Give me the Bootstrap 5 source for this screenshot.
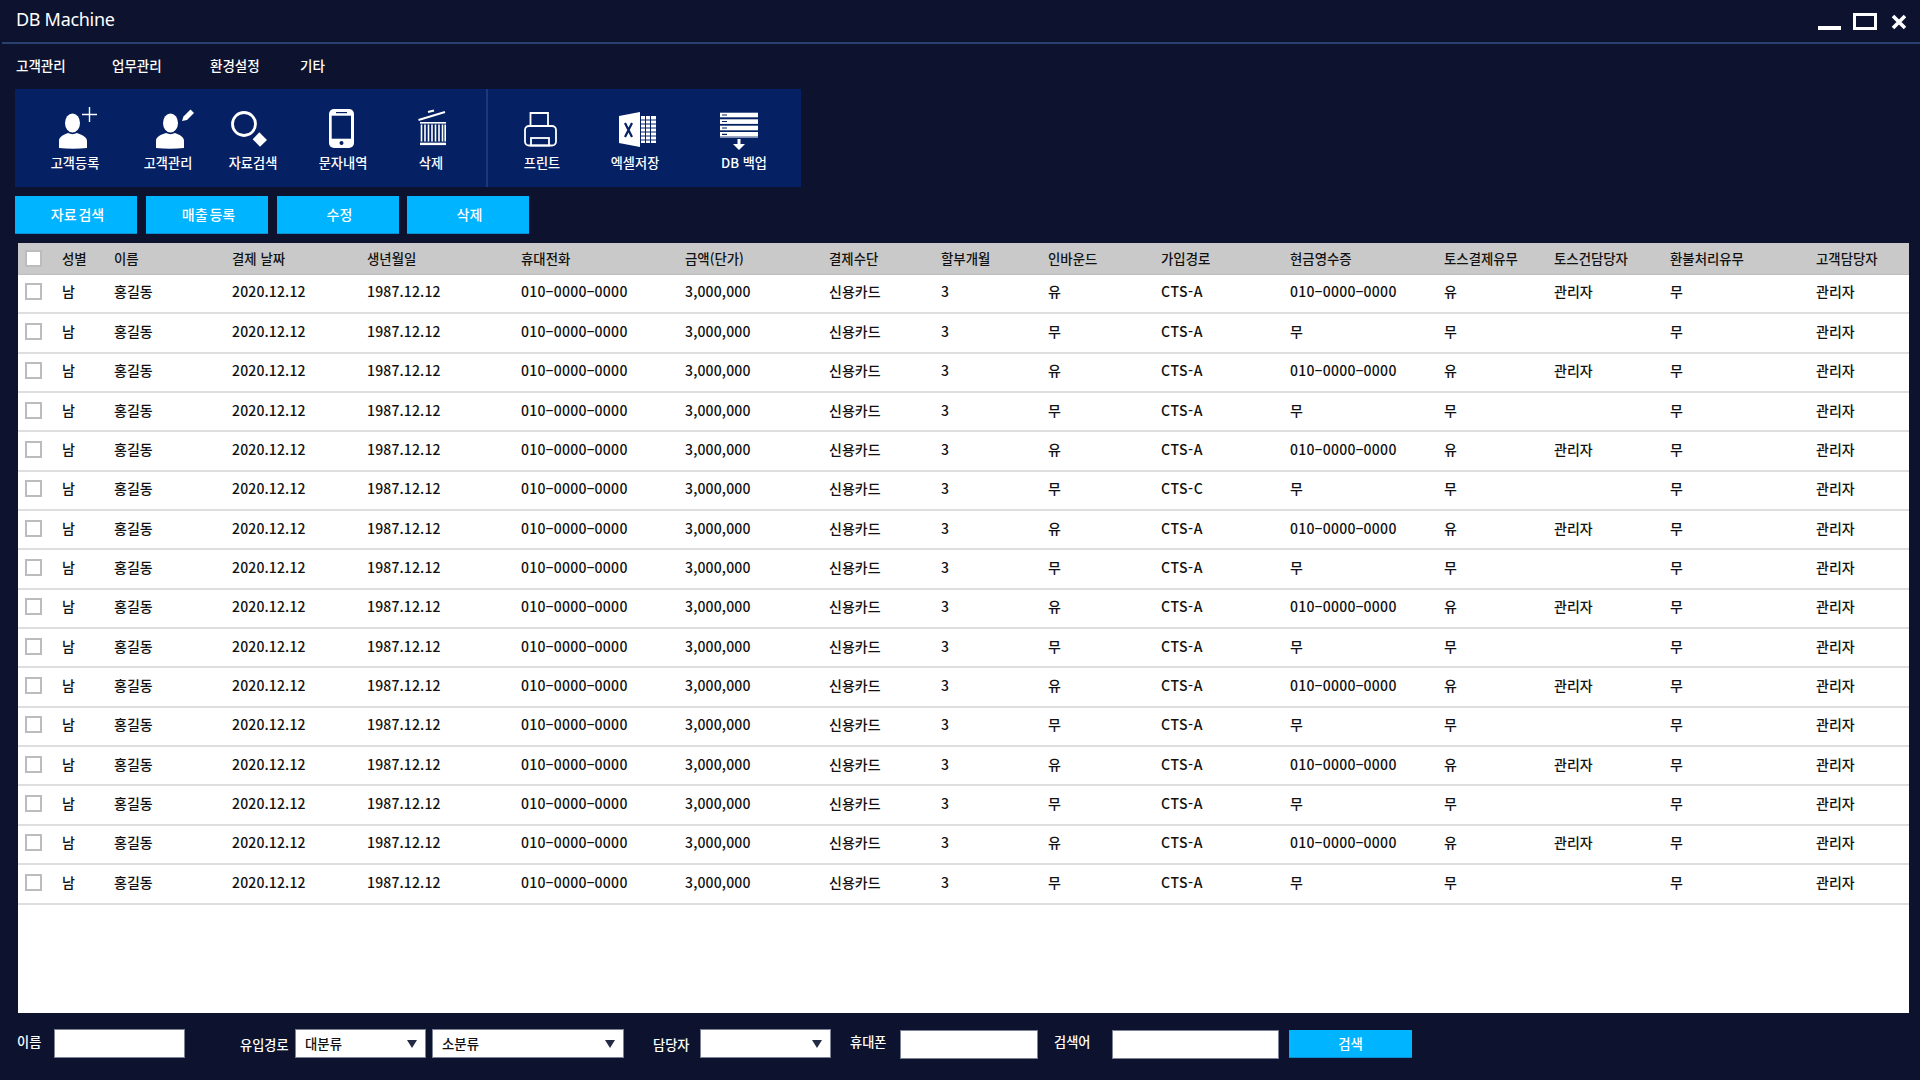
<!DOCTYPE html>
<html lang="ko">
<head>
  <meta charset="UTF-8" />
  <meta name="viewport" content="width=device-width, initial-scale=1.0" />
  <title>DB Machine</title>
  <link href="https://cdn.jsdelivr.net/npm/bootstrap@5.3.0/dist/css/bootstrap.min.css" rel="stylesheet">
  <style>
    html, body {
      height: 1080px;
      overflow: hidden;
    }

    body {
      background: #0d132e;
      color: #fff;
      font-family: "Noto Sans CJK KR", "Noto Sans", sans-serif;
      font-size: 14px;
    }

    .title-bar {
      height: 44px;
      margin-left: 2px;
      padding: 0 14px 0 14px;
      border-bottom: 2px solid #27406f;
    }

    .app-title {
      font-family: "Noto Sans", "Noto Sans CJK KR", sans-serif;
      font-size: 18px;
      letter-spacing: -0.3px;
      line-height: 1;
      margin-bottom: 5px;
    }

    .win-btn {
      display: block;
      margin-top: 7px;
    }

    .menu-bar {
      height: 45px;
      padding: 0 0 2px 16px;
      font-size: 13.5px;
      font-weight: 500;
    }

    .menu-item {
      color: #fff;
      text-decoration: none;
    }

    .menu-item:nth-child(1) { width: 96px; }
    .menu-item:nth-child(2) { width: 98px; }
    .menu-item:nth-child(3) { width: 90px; }

    .tool-bar {
      width: 786px;
      height: 98px;
      margin-left: 15px;
      background: #052163;
    }

    .tool-item {
      width: 60px;
      padding-top: 17px;
      text-align: center;
      font-size: 13.2px;
      font-weight: 500;
      line-height: 19px;
      white-space: nowrap;
    }

    .tool-item svg {
      display: block;
      margin-bottom: 3px;
    }

    .tool-item:nth-child(1) { margin-left: 30px; }
    .tool-item:nth-child(2) { margin-left: 33px; }
    .tool-item:nth-child(3) { margin-left: 25px; }
    .tool-item:nth-child(4) { margin-left: 30px; }
    .tool-item:nth-child(5) { margin-left: 28px; }
    .tool-item:nth-child(7) { margin-left: 24px; }
    .tool-item:nth-child(8) { margin-left: 33px; }
    .tool-item:nth-child(9) { margin-left: 49px; }

    .tool-sep {
      width: 2px;
      margin-left: 25px;
      background: #1b3a7c;
    }

    .action-bar {
      gap: 9px;
      margin: 9px 0 9px 15px;
    }

    .action-bar .sky-btn:last-child { margin-left: -1px; }

    .sky-btn {
      width: 122px;
      height: 38px;
      padding: 0 0 0 3px;
      color: #fff;
      font-size: 14px;
      font-weight: 500;
      word-spacing: -2px;
      background: #00b4ff;
      border: 0;
      border-bottom: 1px solid #0a8fd0;
      border-radius: 0;
    }

    .sky-btn:hover {
      color: #fff;
      background: #00b4ff;
    }

    .grid-panel {
      height: 770px;
      margin: 0 11px 0 18px;
      background: #fff;
    }

    .data-grid {
      table-layout: fixed;
      width: 1891px;
      margin: 0;
      font-size: 14px;
      color: #111;
    }

    .data-grid th,
    .data-grid td {
      padding: 0;
      vertical-align: middle;
      white-space: nowrap;
      box-shadow: none;
    }

    .data-grid th {
      height: 31px;
      font-size: 13.4px;
      font-weight: 500;
      background: #c9c9c9;
      border-bottom: 1px solid #bdbdbd;
    }

    .data-grid td {
      height: 39.35px;
      padding-bottom: 3px;
      font-weight: 500;
      border-bottom: 2px solid #dedede;
    }

    .data-grid .num { letter-spacing: 0.15px; }
    .data-grid .tel { letter-spacing: 0.3px; }
    .data-grid .latin { letter-spacing: 0.6px; }

    .dash {
      display: inline-block;
      width: 7.8px;
      text-align: center;
      transform: scaleX(1.8);
    }

    .data-grid .form-check-input {
      display: block;
      width: 17px;
      height: 17px;
      margin: 0 0 0 7px;
      background-color: #fff;
      border: 2px solid #bcbcbc;
      border-radius: 0;
    }

    .col-check { width: 44px; }
    .col-gender { width: 52px; }
    .col-name { width: 118px; }
    .col-date { width: 135px; }
    .col-birth { width: 154px; }
    .col-phone { width: 164px; }
    .col-amount { width: 144px; }
    .col-pay { width: 112px; }
    .col-months { width: 107px; }
    .col-inbound { width: 113px; }
    .col-route { width: 129px; }
    .col-receipt { width: 154px; }
    .col-toss { width: 110px; }
    .col-tossman { width: 116px; }
    .col-refund { width: 146px; }
    .col-owner { width: 93px; }

    .search-bar {
      height: 67px;
      padding: 16px 0 0 17px;
      font-size: 13.2px;
      font-weight: 500;
    }

    .search-bar .form-control,
    .search-bar .form-select {
      height: 29px;
      min-height: 0;
      padding: 0 0 0 9px;
      color: #111;
      font-size: 13.4px;
      font-weight: 500;
      border: 1px solid #7d8397;
      border-radius: 0;
    }

    .search-bar .form-select {
      background-image: url("data:image/svg+xml,%3Csvg xmlns='http://www.w3.org/2000/svg' viewBox='0 0 10 8'%3E%3Cpath fill='%23222a44' d='M0 0h10L5 8z'/%3E%3C/svg%3E");
      background-position: right 8px center;
      background-size: 10px 8px;
    }

    .f-label-name { width: 37px; padding-top: 3px; }
    .f-label-route { width: 55px; margin-left: 55px; padding-top: 6px; }
    .f-label-owner { width: 47px; margin-left: 29px; padding-top: 6px; }
    .f-label-phone { width: 50px; margin-left: 19px; padding-top: 3px; }
    .f-label-word { width: 58px; margin-left: 16px; padding-top: 3px; }
    .search-bar .f-input-name { width: 131px; }
    .search-bar .f-select-a { width: 131px; }
    .search-bar .f-select-b { width: 192px; margin-left: 6px; }
    .search-bar .f-select-c { width: 131px; }
    .search-bar .f-input-phone { width: 138px; margin-top: 1px; }
    .search-bar .f-input-word { width: 167px; margin-top: 1px; }
    .search-bar .sky-btn { width: 123px; height: 28px; margin: 1px 0 0 10px; padding: 0; font-size: 13.4px; }
  </style>
</head>
<body class="m-0">
  <header class="title-bar d-flex align-items-center">
    <div class="app-title flex-grow-1">DB Machine</div>
    <svg class="win-btn" width="90" height="24" viewBox="0 0 90 24" aria-label="창 조절">
      <rect x="2" y="13" width="23" height="4" fill="#fff" />
      <rect x="38.5" y="1.5" width="21" height="14" fill="none" stroke="#fff" stroke-width="3" />
      <path d="M77 3l12 12M89 3L77 15" stroke="#fff" stroke-width="3.6" fill="none" />
    </svg>
  </header>

  <nav class="menu-bar d-flex align-items-center">
    <a class="menu-item" href="#">고객관리</a>
    <a class="menu-item" href="#">업무관리</a>
    <a class="menu-item" href="#">환경설정</a>
    <a class="menu-item" href="#">기타</a>
  </nav>

  <div class="tool-bar d-flex">
    <div class="tool-item">
      <svg width="60" height="44" viewBox="0 0 60 44">
        <ellipse cx="27.5" cy="17" rx="7.5" ry="9.5" fill="#fff" />
        <path d="M14 42v-7c0-4 4-6 9-8 3 1.500 6 1.500 9 0 5 2 10 4 10 8v7c-9 1-19 1-28 0z" fill="#fff" />
        <path d="M37 8.500h15M44.500 1v15" stroke="#fff" stroke-width="1.400" fill="none" />
      </svg>
      고객등록
    </div>
    <div class="tool-item">
      <svg width="60" height="44" viewBox="0 0 60 44">
        <ellipse cx="32.500" cy="17" rx="7.500" ry="9.500" fill="#fff" />
        <path d="M18 42v-7c0-4 4-6 10-8 3 1.500 6 1.500 9 0 5 2 9 4 9 8v7c-9 1-19 1-28 0z" fill="#fff" />
        <path d="M44 15l1.500-4.500 7-7 3.500 3.500-7 7z" fill="#fff" />
      </svg>
      고객관리
    </div>
    <div class="tool-item">
      <svg width="60" height="44" viewBox="0 0 60 44">
        <circle cx="21" cy="18" r="11.500" fill="none" stroke="#fff" stroke-width="2.800" />
        <path d="M36.300 26.300l7.700 7.700-7 6.700-7.300-7.400z" fill="#fff" />
      </svg>
      자료검색
    </div>
    <div class="tool-item">
      <svg width="60" height="44" viewBox="0 0 60 44">
        <rect x="16" y="3" width="25" height="39" rx="5" fill="#fff" />
        <rect x="18.700" y="9.700" width="19.300" height="23" fill="#052163" />
        <rect x="23" y="6" width="11" height="1.200" fill="#052163" />
        <circle cx="28.500" cy="37" r="2" fill="#052163" />
      </svg>
      문자내역
    </div>
    <div class="tool-item">
      <svg width="60" height="44" viewBox="0 0 60 44">
        <path d="M17.500 14L44 6M27 6l6-1.500" stroke="#fff" stroke-width="2" fill="none" />
        <rect x="19" y="16" width="26" height="1.600" fill="#fff" />
        <path d="M20.500 18.500v17M24 18.500v17M27.500 18.500v17M31 18.500v17M34.500 18.500v17M38 18.500v17M41.500 18.500v17M44.200 18.500v17" stroke="#fff" stroke-width="1.600" fill="none" />
        <rect x="19" y="36.700" width="26" height="2.400" fill="#fff" />
      </svg>
      삭제
    </div>
    <div class="tool-sep"></div>
    <div class="tool-item">
      <svg width="60" height="44" viewBox="0 0 60 44">
        <path d="M18.500 20V7H36v13" fill="none" stroke="#fff" stroke-width="1.800" />
        <rect x="13" y="20" width="31" height="19.500" rx="4" fill="none" stroke="#fff" stroke-width="1.800" />
        <rect x="19" y="32" width="18" height="7.500" fill="none" stroke="#fff" stroke-width="1.800" />
      </svg>
      프린트
    </div>
    <div class="tool-item">
      <svg width="60" height="44" viewBox="0 0 60 44">
        <path d="M14 10l21-4v35l-21-4z" fill="#fff" />
        <path d="M20 17l7 14M27 17l-7 14" stroke="#052163" stroke-width="2.200" fill="none" />
        <rect x="36" y="10" width="15" height="27" fill="#fff" />
        <path d="M36 14h15M36 18h15M36 22h15M36 26h15M36 30h15M36 34h15M40.500 10v27M45.500 10v27" stroke="#052163" stroke-width="1" fill="none" />
      </svg>
      엑셀저장
    </div>
    <div class="tool-item">
      <svg width="60" height="44" viewBox="0 0 60 44">
        <rect x="6" y="6.700" width="38" height="4.600" fill="#fff" />
        <rect x="6" y="13.300" width="38" height="4.600" fill="#fff" />
        <rect x="6" y="19.700" width="38" height="4.600" fill="#fff" />
        <rect x="6" y="26" width="38" height="4.600" fill="#fff" />
        <path d="M8 9h5M8 15.500h5M8 22h5M8 28.300h5" stroke="#052163" stroke-width="1.200" fill="none" />
        <path d="M6 31.500h38" stroke="#7f90b8" stroke-width="1" fill="none" />
        <path d="M23.500 33h3v5h4.500L25 44l-6-6h4.500z" fill="#fff" />
      </svg>
      DB 백업
    </div>
  </div>

  <div class="action-bar d-flex">
    <button type="button" class="btn sky-btn">자료 검색</button>
    <button type="button" class="btn sky-btn">매출 등록</button>
    <button type="button" class="btn sky-btn">수정</button>
    <button type="button" class="btn sky-btn">삭제</button>
  </div>

  <div class="grid-panel">
    <table class="table data-grid">
      <colgroup>
        <col class="col-check"><col class="col-gender"><col class="col-name"><col class="col-date">
        <col class="col-birth"><col class="col-phone"><col class="col-amount"><col class="col-pay">
        <col class="col-months"><col class="col-inbound"><col class="col-route"><col class="col-receipt">
        <col class="col-toss"><col class="col-tossman"><col class="col-refund"><col class="col-owner">
      </colgroup>
      <thead>
        <tr>
          <th><input class="form-check-input" type="checkbox" aria-label="전체 선택"></th>
          <th>성별</th>
          <th>이름</th>
          <th>결제 날짜</th>
          <th>생년월일</th>
          <th>휴대전화</th>
          <th>금액(단가)</th>
          <th>결제수단</th>
          <th>할부개월</th>
          <th>인바운드</th>
          <th>가입경로</th>
          <th>현금영수증</th>
          <th>토스결제유무</th>
          <th>토스건담당자</th>
          <th>환불처리유무</th>
          <th>고객담당자</th>
        </tr>
      </thead>
      <tbody id="gridRows"></tbody>
    </table>
  </div>

  <form class="search-bar d-flex align-items-start">
    <label class="f-label-name">이름</label>
    <input type="text" class="form-control f-input-name">
    <label class="f-label-route">유입경로</label>
    <select class="form-select f-select-a"><option>대분류</option></select>
    <select class="form-select f-select-b"><option>소분류</option></select>
    <label class="f-label-owner">담당자</label>
    <select class="form-select f-select-c"><option></option></select>
    <label class="f-label-phone">휴대폰</label>
    <input type="text" class="form-control f-input-phone">
    <label class="f-label-word">검색어</label>
    <input type="text" class="form-control f-input-word">
    <button type="button" class="btn sky-btn">검색</button>
  </form>

  <script>
    const gridRows = document.getElementById('gridRows');
    const phone = '<span class="tel">010<span class="dash">-</span>0000<span class="dash">-</span>0000</span>';
    for (let i = 0; i < 16; i++) {
      const paid = i % 2 === 0;
      const route = i === 5 ? 'CTS-C' : 'CTS-A';
      gridRows.innerHTML += `<tr>
        <td><input class="form-check-input" type="checkbox" aria-label="선택"></td>
        <td>남</td>
        <td>홍길동</td>
        <td class="num">2020.12.12</td>
        <td class="num">1987.12.12</td>
        <td>${phone}</td>
        <td class="num">3,000,000</td>
        <td>신용카드</td>
        <td>3</td>
        <td>${paid ? '유' : '무'}</td>
        <td class="latin">${route}</td>
        <td>${paid ? phone : '무'}</td>
        <td>${paid ? '유' : '무'}</td>
        <td>${paid ? '관리자' : ''}</td>
        <td>무</td>
        <td>관리자</td>
      </tr>`;
    }
  </script>
  <script src="https://cdn.jsdelivr.net/npm/bootstrap@5.3.0/dist/js/bootstrap.bundle.min.js"></script>
</body>
</html>
